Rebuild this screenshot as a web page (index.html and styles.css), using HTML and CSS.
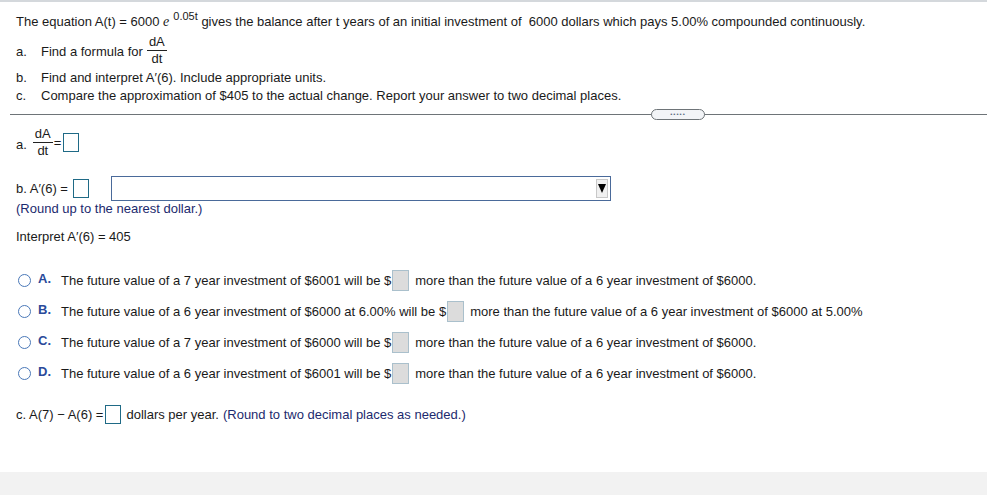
FILE: index.html
```html
<!DOCTYPE html>
<html>
<head>
<meta charset="utf-8">
<link rel="stylesheet" href="styles.css">
</head>
<body>
<div class="page">
  <div class="question">
    <p class="stmt">The equation A(t) = 6000 <span class="e">e</span><sup class="exp">0.05t</sup> gives the balance after t years of an initial investment of &nbsp;6000 dollars which pays 5.00% compounded continuously.</p>
    <div class="part part-a"><span class="lbl">a.</span><span class="pa-text">Find a formula for</span><span class="frac"><span class="num">dA</span><span class="den">dt</span></span></div>
    <div class="part"><span class="lbl">b.</span><span>Find and interpret A′(6). Include appropriate units.</span></div>
    <div class="part"><span class="lbl">c.</span><span>Compare the approximation of $405 to the actual change. Report your answer to two decimal places.</span></div>
  </div>

  <div class="divider"><span class="handle">•••••</span></div>

  <div class="answer">
    <div class="ans-a"><span class="albl">a.</span><span class="frac"><span class="num">dA</span><span class="den">dt</span></span><span class="eq">=</span><span class="box"></span></div>

    <div class="ans-b"><span>b. A′(6) =</span><span class="box"></span><span class="select"><span class="arrow"></span></span></div>
    <div class="hint">(Round up to the nearest dollar.)</div>
    <div class="interp">Interpret A′(6) = 405</div>

    <div class="options">
      <div class="opt"><span class="radio"></span><span class="letter">A.</span><span>The future value of a 7 year investment of $6001 will be $</span><span class="gbox"></span><span>more than the future value of a 6 year investment of $6000.</span></div>
      <div class="opt"><span class="radio"></span><span class="letter">B.</span><span>The future value of a 6 year investment of $6000 at 6.00% will be $</span><span class="gbox"></span><span>more than the future value of a 6 year investment of $6000 at 5.00%</span></div>
      <div class="opt"><span class="radio"></span><span class="letter">C.</span><span>The future value of a 7 year investment of $6000 will be $</span><span class="gbox"></span><span>more than the future value of a 6 year investment of $6000.</span></div>
      <div class="opt"><span class="radio"></span><span class="letter">D.</span><span>The future value of a 6 year investment of $6001 will be $</span><span class="gbox"></span><span>more than the future value of a 6 year investment of $6000.</span></div>
    </div>

    <div class="ans-c"><span>c. A(7) − A(6) =</span><span class="box"></span><span>dollars per year.</span><span class="hint-in">(Round to two decimal places as needed.)</span></div>
  </div>
</div>
<div class="footer"></div>
</body>
</html>
```
FILE: styles.css
```css
html, body {
  margin: 0;
  padding: 0;
  background: #fff;
}
body {
  font-family: "Liberation Sans", Arial, sans-serif;
  font-size: 13px;
  color: #1a1a1a;
  width: 987px;
  height: 495px;
  overflow: hidden;
  position: relative;
}
.page {
  border-top: 2px solid #d4d8dc;
  height: 470px;
}
.question {
  padding: 10px 0 0 16px;
}
.stmt {
  margin: 0;
  line-height: 20px;
  height: 20px;
}
.e {
  font-family: "Liberation Serif", serif;
  font-style: italic;
  font-size: 14px;
}
.exp {
  font-size: 11px;
  vertical-align: 6px;
  line-height: 0;
  margin-left: 4px;
  margin-right: 0;
}
.part {
  display: flex;
  align-items: center;
  height: 18px;
}
.part-a {
  height: 36px;
}
.pa-text {
  margin-top: 3px;
}
.lbl {
  width: 25px;
  flex: none;
}
.part-a .lbl {
  margin-top: 3px;
}
.frac {
  display: inline-flex;
  flex-direction: column;
  align-items: center;
  margin-left: 4px;
  line-height: 14px;
}
.frac .num {
  border-bottom: 1px solid #222;
  padding: 0 2px 1px;
}
.frac .den {
  padding-top: 1px;
}
.divider {
  margin: 10px 0 0 10px;
  height: 1px;
  background: #6e7478;
  position: relative;
}
.handle {
  position: absolute;
  left: 641px;
  top: -5px;
  width: 52px;
  height: 9px;
  border: 1px solid #6e7478;
  border-radius: 6px;
  background: #f2f4f7;
  font-size: 6px;
  line-height: 9px;
  letter-spacing: 1px;
  text-align: center;
  color: #5a6a80;
}
.answer {
  padding: 10px 0 0 16px;
}
.ans-a {
  display: flex;
  align-items: center;
  height: 34px;
}
.albl {
  margin-top: 4px;
}
.ans-a .frac {
  margin-left: 6px;
}
.eq {
  margin: 0 2px 0 1px;
}
.box {
  display: inline-block;
  width: 14px;
  height: 17px;
  border: 1px solid #1f6a86;
  background: #fff;
  flex: none;
}
.ans-b {
  display: flex;
  align-items: center;
  margin-top: 16px;
  height: 26px;
}
.ans-b .box {
  margin-left: 5px;
}
.select {
  margin-left: 22px;
  width: 498px;
  height: 23px;
  border: 1px solid #4a6a9a;
  position: relative;
  display: flex;
  justify-content: flex-end;
  align-items: center;
}
.arrow {
  width: 10px;
  height: 17px;
  margin-right: 2px;
  background: #f0f0f0;
  border: 1px solid #c8c8c8;
  position: relative;
}
.arrow::after {
  content: "";
  position: absolute;
  left: 1px;
  top: 4px;
  border-left: 4px solid transparent;
  border-right: 4px solid transparent;
  border-top: 9px solid #000;
}
.hint {
  color: #1c2a6e;
  margin-top: -1px;
  line-height: 18px;
}
.interp {
  margin-top: 10px;
  line-height: 18px;
}
.options {
  margin-top: 19px;
  padding-left: 2px;
}
.opt {
  display: flex;
  align-items: center;
  height: 31px;
}
.radio {
  width: 11px;
  height: 11px;
  border: 1px solid #4a78b8;
  border-radius: 50%;
  flex: none;
  margin-right: 7px;
}
.letter {
  color: #2a4a9a;
  font-weight: bold;
  width: 23px;
  flex: none;
  margin-top: -5px;
  font-size: 13px;
}
.gbox {
  display: inline-block;
  width: 15px;
  height: 19px;
  background: #dcdcdc;
  border: 1px solid #aac0cc;
  margin: 0 6px 0 1px;
  flex: none;
}
.ans-c {
  display: flex;
  align-items: center;
  margin-top: 14px;
  height: 22px;
}
.ans-c .box {
  margin: 0 5px 0 2px;
}
.hint-in {
  color: #1c2a6e;
  margin-left: 4px;
}
.footer {
  position: absolute;
  left: 0;
  right: 0;
  bottom: 0;
  height: 23px;
  background: #f2f2f2;
}
```
